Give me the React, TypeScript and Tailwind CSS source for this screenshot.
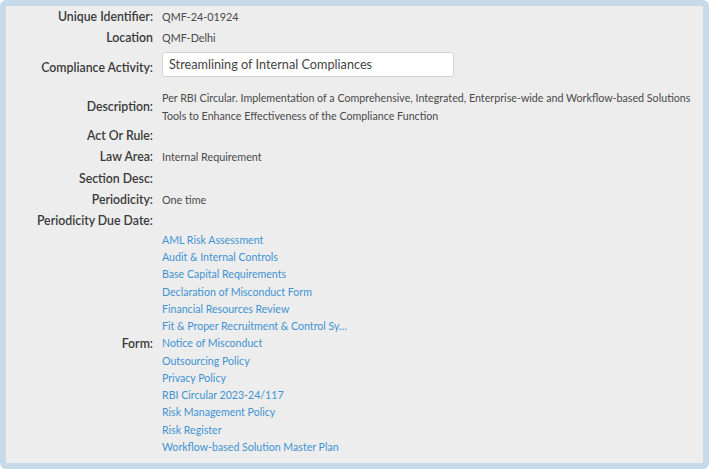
import React from "react";

const links = [
  "AML Risk Assessment",
  "Audit & Internal Controls",
  "Base Capital Requirements",
  "Declaration of Misconduct Form",
  "Financial Resources Review",
  "Fit & Proper Recruitment & Control Sy…",
  "Notice of Misconduct",
  "Outsourcing Policy",
  "Privacy Policy",
  "RBI Circular 2023-24/117",
  "Risk Management Policy",
  "Risk Register",
  "Workflow-based Solution Master Plan",
];

function Row({ label, h, children, top }: { label: string; h: string; children?: React.ReactNode; top?: boolean }) {
  return (
    <div className={`flex ${h}`}>
      <div className="w-[147px] shrink-0 flex items-center justify-end text-[12.3px] font-semibold text-[#3a3a3a] leading-none">
        {label}
      </div>
      <div className={`flex-1 pl-[9px] flex ${top ? "items-start" : "items-center"} text-[10.8px] text-[#4a4a4a]`}>
        {children}
      </div>
    </div>
  );
}

export default function App() {
  return (
    <div className="h-[469px] w-[709px] bg-[#c6dae9] p-[6px] rounded-[6px]" style={{ fontFamily: "Lato, 'Noto Sans', sans-serif" }}>
      <div className="h-full bg-[#ededed]">
        <Row label="Unique Identifier:" h="h-[22px]">QMF-24-01924</Row>
        <Row label="Location" h="h-[20px]">QMF-Delhi</Row>
        <Row label="Compliance Activity:" h="h-[40px]" top>
          <div className="mt-[4px] w-[292px] h-[25px] bg-white border border-[#d2d2d2] rounded-[3px] px-[6px] flex items-center text-[12.7px] text-[#444]">
            Streamlining of Internal Compliances
          </div>
        </Row>
        <Row label="Description:" h="h-[38px]">
          <div className="leading-[18px] text-[10.7px]">
            <span className="whitespace-nowrap">Per RBI Circular. Implementation of a Comprehensive, Integrated, Enterprise-wide and Workflow-based Solutions</span>
            <br />
            Tools to Enhance Effectiveness of the Compliance Function
          </div>
        </Row>
        <Row label="Act Or Rule:" h="h-[20px]" />
        <Row label="Law Area:" h="h-[22px]">Internal Requirement</Row>
        <Row label="Section Desc:" h="h-[22px]" />
        <Row label="Periodicity:" h="h-[20px]">One time</Row>
        <Row label="Periodicity Due Date:" h="h-[22px]" />
        <Row label="Form:" h="h-[224px]">
          <div className="flex flex-col leading-[17.25px] text-[10.6px] text-[#3f93d3]">
            {links.map((l) => (
              <a key={l} href="#" className="whitespace-nowrap">{l}</a>
            ))}
          </div>
        </Row>
      </div>
    </div>
  );
}
